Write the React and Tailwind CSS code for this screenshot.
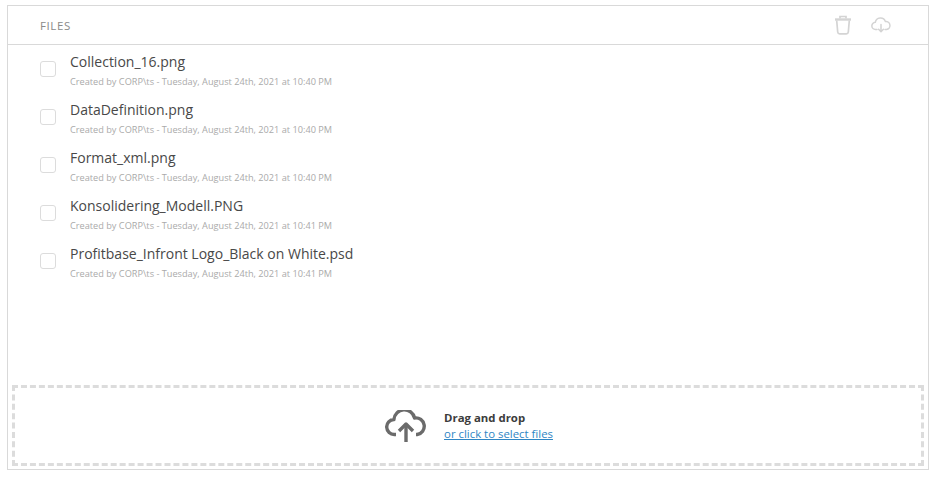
import React from 'react';

const files = [
    { name: 'Collection_16.png', time: '10:40 PM' },
    { name: 'DataDefinition.png', time: '10:40 PM' },
    { name: 'Format_xml.png', time: '10:40 PM' },
    { name: 'Konsolidering_Modell.PNG', time: '10:41 PM' },
    { name: 'Profitbase_Infront Logo_Black on White.psd', time: '10:41 PM' },
];

const TrashIcon = () => (
    <svg width="18" height="20" viewBox="0 0 18 20" fill="none" stroke="#d4d4d4" strokeWidth="1.7">
        <path d="M1 4.5h16" strokeWidth="2.4" />
        <path d="M6 3.5V1.5h6v2" />
        <path d="M2.7 5.5l1 11.5a2 2 0 0 0 2 1.8h6.6a2 2 0 0 0 2-1.8l1-11.5" />
    </svg>
);

const CloudDownIcon = () => (
    <svg width="20" height="16" viewBox="0 0 20 16" fill="none" stroke="#d4d4d4" strokeWidth="1.5" strokeLinecap="round" strokeLinejoin="round">
        <path d="M6 12.5H4.6A3.6 3.6 0 0 1 4.3 5.3 5.2 5.2 0 0 1 14.4 4.6a3.9 3.9 0 0 1 1.1 7.9H14" />
        <path d="M10 7.5v7M7.6 12.2l2.4 2.5 2.4-2.5" />
    </svg>
);

const CloudUpIcon = () => (
    <svg width="42" height="32" viewBox="0 0 42 32" fill="none" stroke="#6b6b6b" strokeWidth="3.4" strokeLinejoin="round">
        <path d="M11 24.5H9.5a7.5 7.5 0 0 1-.6-15A10.5 10.5 0 0 1 29.6 8a8.3 8.3 0 0 1 2.6 16.5H31" />
        <path d="M21 32V14.5" />
        <path d="M14 21l7-7 7 7" />
    </svg>
);

export default function App() {
    return (
        <div className="h-[481px] w-[937px] bg-white pt-[5px] pr-2 pb-[11px] pl-[7px] font-['Open_Sans','Noto_Sans',sans-serif]">
            <div className="flex h-full flex-col border border-[#d9d9d9]">
                <div className="flex h-[39px] shrink-0 items-center justify-between border-b border-[#d9d9d9] pl-[32px] pr-[37px]">
                    <span className="pt-[1px] text-[11.5px] font-medium tracking-[0.6px] text-[#8a8a8a]">FILES</span>
                    <div className="flex items-center gap-[19px]">
                        <TrashIcon />
                        <CloudDownIcon />
                    </div>
                </div>

                <div className="flex-1 pl-[32px] pt-[8px]">
                    {files.map((file) => (
                        <div key={file.name} className="flex h-[48px] items-start">
                            <span className="mt-[8px] mr-[14px] h-[16px] w-[16px] rounded-[3px] border border-[#dcdcdc]" />
                            <div>
                                <div className="text-[14px] leading-[18px] font-medium text-[#484848]">{file.name}</div>
                                <div className="mt-[4px] text-[9.2px] leading-[14px] text-[#aaaaaa]">
                                    Created by CORP\ts - Tuesday, August 24th, 2021 at {file.time}
                                </div>
                            </div>
                        </div>
                    ))}
                </div>

                <div className="mx-1 mb-[3px] flex h-[81px] shrink-0 items-center justify-center gap-[17px] border-[3px] border-dashed border-[#dcdcdc] pl-[2px]">
                    <CloudUpIcon />
                    <div className="text-[11.4px] leading-[16px]">
                        <div className="font-bold text-[#3c3c3c]">Drag and drop</div>
                        <a className="text-[#2f86c4] underline">or click to select files</a>
                    </div>
                </div>
            </div>
        </div>
    );
}
